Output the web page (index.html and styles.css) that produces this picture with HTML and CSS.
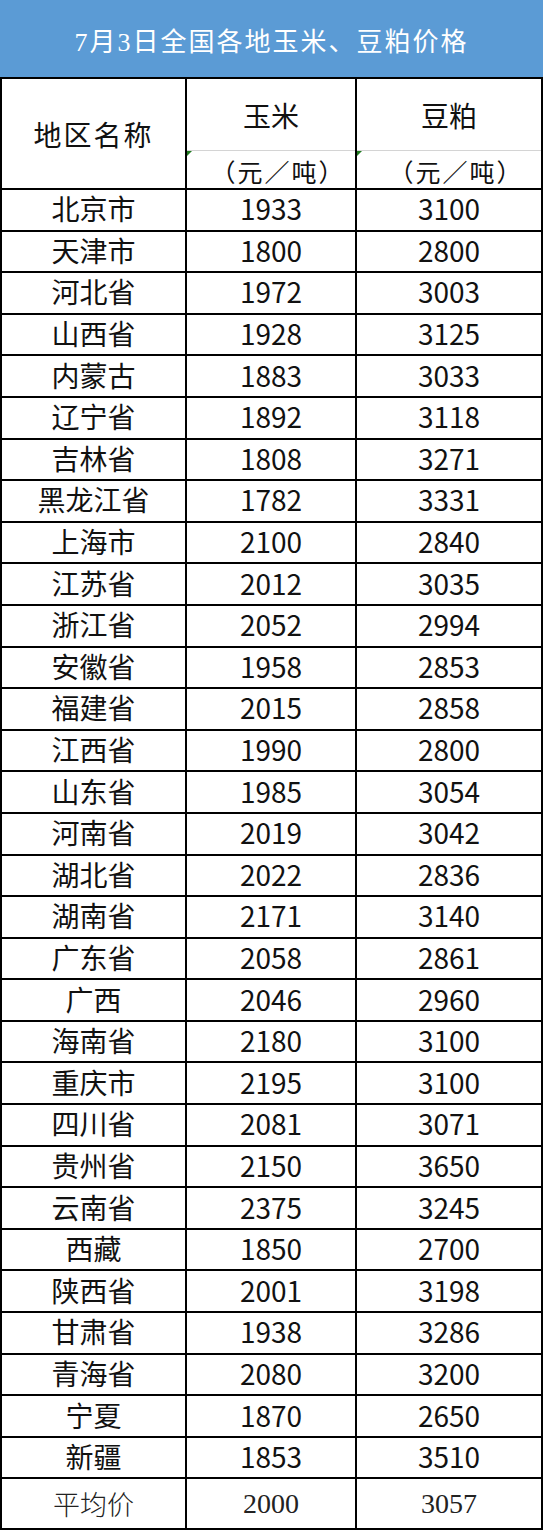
FILE: index.html
```html
<!DOCTYPE html>
<html lang="zh-CN">
<head>
<meta charset="utf-8">
<title>7月3日全国各地玉米、豆粕价格</title>
<link rel="stylesheet" href="styles.css">
</head>
<body>
<div class="sheet">
  <div class="title">7月3日全国各地玉米、豆粕价格</div>
  <div class="grid">
    <div class="cell head region">地区名称</div>
    <div class="cell head split">
      <div class="name">玉米</div>
      <div class="unit">（元/吨）</div>
    </div>
    <div class="cell head split">
      <div class="name">豆粕</div>
      <div class="unit">（元/吨）</div>
    </div>

    <div class="cell">北京市</div><div class="cell">1933</div><div class="cell">3100</div>
    <div class="cell">天津市</div><div class="cell">1800</div><div class="cell">2800</div>
    <div class="cell">河北省</div><div class="cell">1972</div><div class="cell">3003</div>
    <div class="cell">山西省</div><div class="cell">1928</div><div class="cell">3125</div>
    <div class="cell">内蒙古</div><div class="cell">1883</div><div class="cell">3033</div>
    <div class="cell">辽宁省</div><div class="cell">1892</div><div class="cell">3118</div>
    <div class="cell">吉林省</div><div class="cell">1808</div><div class="cell">3271</div>
    <div class="cell">黑龙江省</div><div class="cell">1782</div><div class="cell">3331</div>
    <div class="cell">上海市</div><div class="cell">2100</div><div class="cell">2840</div>
    <div class="cell">江苏省</div><div class="cell">2012</div><div class="cell">3035</div>
    <div class="cell">浙江省</div><div class="cell">2052</div><div class="cell">2994</div>
    <div class="cell">安徽省</div><div class="cell">1958</div><div class="cell">2853</div>
    <div class="cell">福建省</div><div class="cell">2015</div><div class="cell">2858</div>
    <div class="cell">江西省</div><div class="cell">1990</div><div class="cell">2800</div>
    <div class="cell">山东省</div><div class="cell">1985</div><div class="cell">3054</div>
    <div class="cell">河南省</div><div class="cell">2019</div><div class="cell">3042</div>
    <div class="cell">湖北省</div><div class="cell">2022</div><div class="cell">2836</div>
    <div class="cell">湖南省</div><div class="cell">2171</div><div class="cell">3140</div>
    <div class="cell">广东省</div><div class="cell">2058</div><div class="cell">2861</div>
    <div class="cell">广西</div><div class="cell">2046</div><div class="cell">2960</div>
    <div class="cell">海南省</div><div class="cell">2180</div><div class="cell">3100</div>
    <div class="cell">重庆市</div><div class="cell">2195</div><div class="cell">3100</div>
    <div class="cell">四川省</div><div class="cell">2081</div><div class="cell">3071</div>
    <div class="cell">贵州省</div><div class="cell">2150</div><div class="cell">3650</div>
    <div class="cell">云南省</div><div class="cell">2375</div><div class="cell">3245</div>
    <div class="cell">西藏</div><div class="cell">1850</div><div class="cell">2700</div>
    <div class="cell">陕西省</div><div class="cell">2001</div><div class="cell">3198</div>
    <div class="cell">甘肃省</div><div class="cell">1938</div><div class="cell">3286</div>
    <div class="cell">青海省</div><div class="cell">2080</div><div class="cell">3200</div>
    <div class="cell">宁夏</div><div class="cell">1870</div><div class="cell">2650</div>
    <div class="cell">新疆</div><div class="cell">1853</div><div class="cell">3510</div>

    <div class="cell avg avg-label">平均价</div><div class="cell avg">2000</div><div class="cell avg">3057</div>
  </div>
</div>
</body>
</html>
```

FILE: styles.css
```css
html, body {
  margin: 0;
  padding: 0;
  background: #ffffff;
}

.sheet {
  width: 543px;
}

.title {
  height: 77px;
  background: #5b9bd5;
  color: #ffffff;
  display: flex;
  align-items: center;
  justify-content: center;
  font-family: "Liberation Serif", "Noto Sans CJK SC", serif;
  font-size: 26px;
  letter-spacing: 2px;
  padding-top: 2px;
  box-sizing: border-box;
}

.grid {
  display: grid;
  grid-template-columns: 183px 168px 184px;
  grid-template-rows: 109px repeat(31, 39.6px) 49px;
  gap: 2px;
  padding: 2px;
  background: #000000;
}

.cell {
  background: #ffffff;
  display: flex;
  align-items: center;
  justify-content: center;
  font-family: "Noto Sans CJK SC", "Noto Sans", sans-serif;
  font-size: 28px;
  color: #111111;
  line-height: 1;
  padding-bottom: 3px;
  box-sizing: border-box;
}

.head {
  font-family: "Liberation Serif", "Noto Sans CJK SC", serif;
  color: #111111;
  padding-bottom: 0;
}

.region {
  font-size: 28px;
  letter-spacing: 2px;
  padding-top: 6px;
}

.split {
  flex-direction: column;
  align-items: stretch;
  justify-content: flex-start;
}

.split .name {
  height: 72px;
  border-bottom: 1px solid #d4d4d4;
  box-sizing: border-box;
  display: flex;
  align-items: center;
  justify-content: center;
  font-size: 28px;
  padding-top: 6px;
}

.split .unit {
  position: relative;
  flex: 1;
  display: flex;
  align-items: center;
  justify-content: center;
  font-family: "Noto Sans CJK SC", sans-serif;
  font-size: 25px;
  letter-spacing: 2px;
  text-spacing-trim: space-all;
  font-feature-settings: "fwid" 1;
  padding-top: 3px;
  padding-left: 14px;
}

.split .unit::before {
  content: "";
  position: absolute;
  left: 0;
  top: 0;
  width: 0;
  height: 0;
  border-top: 5px solid #1f7a1f;
  border-right: 5px solid transparent;
}

.avg {
  font-family: "Liberation Serif", serif;
  font-size: 28px;
  color: #222222;
  padding-bottom: 0;
}

.avg-label {
  font-family: "Noto Sans CJK SC", sans-serif;
  font-weight: 300;
  font-size: 27px;
}
```
